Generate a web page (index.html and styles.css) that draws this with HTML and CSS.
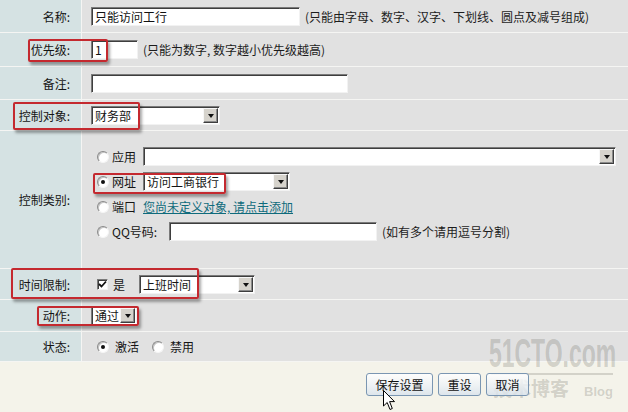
FILE: index.html
```html
<!DOCTYPE html>
<html lang="zh-CN">

<head>
    <meta charset="utf-8">
    <title>访问控制规则</title>
    <link rel="stylesheet" href="styles.css">
</head>

<body>
    <div class="page">
        <!-- 规则表单 -->
        <div class="form">
            <div class="row row-name">
                <div class="lab">名称:</div>
                <div class="val">
                    <input class="txt txt-name" type="text" value="只能访问工行">
                    <span class="hint hint-name">(只能由字母、数字、汉字、下划线、圆点及减号组成)</span>
                </div>
            </div>
            <div class="row row-prio">
                <div class="lab">优先级:</div>
                <div class="val">
                    <input class="txt txt-prio" type="text" value="1">
                    <span class="hint">(只能为数字, 数字越小优先级越高)</span>
                </div>
            </div>
            <div class="row row-note">
                <div class="lab">备注:</div>
                <div class="val">
                    <input class="txt txt-note" type="text" value="">
                </div>
            </div>
            <div class="row row-obj">
                <div class="lab">控制对象:</div>
                <div class="val">
                    <div class="sel sel-obj"><span class="sel-text">财务部</span><span class="sel-btn"></span></div>
                </div>
            </div>
            <div class="row row-type">
                <div class="lab">控制类别:</div>
                <div class="val val-opts">
                    <div class="opt">
                        <span class="radio"></span><span class="opt-name">应用</span>
                        <div class="sel sel-app"><span class="sel-text"></span><span class="sel-btn"></span></div>
                    </div>
                    <div class="opt">
                        <span class="radio on"></span><span class="opt-name">网址</span>
                        <div class="sel sel-url"><span class="sel-text">访问工商银行</span><span class="sel-btn"></span></div>
                    </div>
                    <div class="opt">
                        <span class="radio"></span><span class="opt-name">端口</span>
                        <a href="#" class="add">您尚未定义对象, 请点击添加</a>
                    </div>
                    <div class="opt">
                        <span class="radio"></span><span class="opt-name opt-qq">QQ号码:</span>
                        <input class="txt txt-qq" type="text" value="">
                        <span class="hint">(如有多个请用逗号分割)</span>
                    </div>
                </div>
            </div>
            <div class="row row-time">
                <div class="lab">时间限制:</div>
                <div class="val">
                    <span class="check">
                        <svg width="9" height="9" viewBox="0 0 9 9"><path d="M1 4 L3.5 6.5 L8 1.5" fill="none" stroke="#111" stroke-width="1.8"/></svg>
                    </span>
                    <span class="yes">是</span>
                    <div class="sel sel-time"><span class="sel-text">上班时间</span><span class="sel-btn"></span></div>
                </div>
            </div>
            <div class="row row-act">
                <div class="lab">动作:</div>
                <div class="val">
                    <div class="sel sel-act"><span class="sel-text">通过</span><span class="sel-btn"></span></div>
                </div>
            </div>
            <div class="row row-state">
                <div class="lab">状态:</div>
                <div class="val">
                    <span class="radio on"></span><span class="state">激活</span>
                    <span class="radio radio-off"></span><span class="state">禁用</span>
                </div>
            </div>
        </div>

        <!-- 水印放在按钮下层 -->
        <div class="watermark">
            <div class="wm-big">51CTO.com</div>
            <div class="wm-line"></div>
            <div class="wm-small"><span>技术博客</span><span class="wm-blog">Blog</span></div>
        </div>

        <div class="foot">
            <button class="xp xp-save">保存设置</button>
            <button class="xp">重设</button>
            <button class="xp">取消</button>
        </div>

        <!-- 红框标注 -->
        <div class="mark mark-prio"></div>
        <div class="mark mark-obj"></div>
        <div class="mark mark-url"></div>
        <div class="mark mark-time"></div>
        <div class="mark mark-act"></div>

        <svg class="pointer" width="13" height="21" viewBox="0 0 13 21">
            <path d="M0.5 0.5 L0.5 16 L4.2 12.5 L7 19.5 L9.3 18.5 L6.6 11.6 L11.5 11.6 Z" fill="#fff" stroke="#000" stroke-width="1"/>
        </svg>
    </div>
</body></html>
```

FILE: styles.css
```css
* {
    box-sizing: border-box;
}

body {
    margin: 0;
    font-family: "Noto Sans CJK SC", sans-serif;
    font-size: 12px;
    color: #151515;
    background: #f4f3ea;
}

.page {
    position: relative;
    width: 628px;
    height: 412px;
    overflow: hidden;
}

.row {
    display: grid;
    grid-template-columns: 82px 1fr;
    border-bottom: 1px solid #f5f5f3;
}

.row-name { height: 33px; }
.row-prio { height: 34px; }
.row-note { height: 33px; }
.row-obj { height: 31px; }
.row-type { height: 138px; }
.row-time { height: 31px; }
.row-act { height: 32px; }
.row-state { height: 30px; }

.lab {
    background: #d5e2e3;
    border-right: 1px solid #f5f5f3;
    display: flex;
    align-items: center;
    justify-content: flex-end;
    padding-right: 11px;
}

.val {
    background: #e1e1e1;
    display: flex;
    align-items: center;
    padding-left: 9px;
}

/* 输入框 */
.txt {
    height: 19px;
    margin: 0;
    padding: 0 3px;
    border: 1px solid;
    border-color: #7a7a7a #f2f2f2 #f2f2f2 #7a7a7a;
    box-shadow: inset 1px 1px 0 #3e3e3e;
    background: #fff;
    font-family: "Noto Sans CJK SC", sans-serif;
    font-size: 12px;
    color: #111;
    outline: none;
}

.txt-name { width: 209px; }
.txt-prio { width: 47px; }
.txt-note { width: 257px; }
.txt-qq { width: 208px; }

.hint {
    margin-left: 5px;
    color: #1c1c1c;
}

/* 下拉框 */
.sel {
    display: flex;
    align-items: stretch;
    height: 19px;
    padding: 1px 1px 1px 3px;
    border: 1px solid;
    border-color: #7a7a7a #f2f2f2 #f2f2f2 #7a7a7a;
    box-shadow: inset 1px 1px 0 #3e3e3e;
    background: #fff;
}

.sel-text {
    flex: 1;
    line-height: 15px;
    white-space: nowrap;
    overflow: hidden;
}

.sel-btn {
    width: 15px;
    background: #d6d3cc;
    border: 1px solid;
    border-color: #f7f7f7 #3e3e3e #3e3e3e #f7f7f7;
    box-shadow: inset -1px -1px 0 #8a8a8a;
    display: flex;
    align-items: center;
    justify-content: center;
}

.sel-btn::after {
    content: "";
    border-left: 3.5px solid transparent;
    border-right: 3.5px solid transparent;
    border-top: 4px solid #111;
    margin-top: 1px;
}

.sel-obj { width: 129px; }
.sel-app { width: 473px; }
.sel-url { width: 147px; }
.sel-time { width: 116px; }
.sel-act { width: 46px; }

/* 控制类别 */
.val-opts {
    flex-direction: column;
    align-items: flex-start;
    justify-content: flex-start;
    padding-top: 13px;
}

.opt {
    height: 25px;
    display: flex;
    align-items: center;
}

.radio {
    width: 12px;
    height: 12px;
    margin-left: 6px;
    border-radius: 50%;
    border: 1px solid;
    border-color: #8a8a8a #f5f5f5 #f5f5f5 #8a8a8a;
    background: #fff;
    box-shadow: inset 1px 1px 0 #c4c4c4;
    display: flex;
    align-items: center;
    justify-content: center;
}

.radio.on::after {
    content: "";
    width: 4px;
    height: 4px;
    border-radius: 50%;
    background: #111;
}

.radio-off {
    margin-left: 13px;
}

.opt-name {
    width: 31px;
    margin-left: 3px;
}

.opt-qq {
    width: 57px;
}

.add {
    color: #0f6b7c;
    text-decoration: underline;
}

.check {
    width: 11px;
    height: 11px;
    margin-left: 6px;
    border: 1px solid;
    border-color: #7a7a7a #f2f2f2 #f2f2f2 #7a7a7a;
    box-shadow: inset 1px 1px 0 #3e3e3e;
    background: #fff;
    display: flex;
    align-items: center;
    justify-content: center;
}

.yes {
    margin-left: 5px;
    width: 26px;
}

.state {
    margin-left: 6px;
}

/* 底部按钮 */
.foot {
    position: relative;
    height: 50px;
    display: flex;
    align-items: flex-start;
    gap: 5px;
    padding: 11px 0 0 366px;
}

.xp {
    height: 23px;
    width: 43px;
    padding: 0;
    border: 1px solid #7a96b2;
    border-radius: 3px;
    background: linear-gradient(rgba(255, 255, 255, 0.85), rgba(236, 241, 246, 0.8) 55%, rgba(216, 226, 236, 0.8));
    font-family: "Noto Sans CJK SC", sans-serif;
    font-size: 12px;
    color: #111;
}

.xp-save {
    width: 67px;
}

/* 红框 */
.mark {
    position: absolute;
    border: 2px solid #c4292f;
    border-radius: 2px;
    box-shadow: 2px 3px 3px rgba(0, 0, 0, 0.35);
}

.mark-prio { left: 28px; top: 39px; width: 80px; height: 23px; }
.mark-obj { left: 13px; top: 102px; width: 127px; height: 28px; }
.mark-url { left: 93px; top: 173px; width: 133px; height: 21px; }
.mark-time { left: 11px; top: 268px; width: 188px; height: 31px; }
.mark-act { left: 37px; top: 306px; width: 102px; height: 20px; }

/* 水印 */
.watermark {
    position: absolute;
    left: 489px;
    top: 333px;
    width: 126px;
    color: rgba(95, 95, 85, 0.24);
    pointer-events: none;
}

.wm-big {
    font-family: "Liberation Sans", sans-serif;
    font-weight: bold;
    font-size: 41px;
    line-height: 40px;
    transform: scaleX(0.56);
    transform-origin: left top;
    white-space: nowrap;
}

.wm-line {
    height: 2px;
    margin: 0 2px;
    background: rgba(95, 95, 85, 0.22);
}

.wm-small {
    display: flex;
    align-items: baseline;
    justify-content: space-between;
    padding: 0 2px 0 4px;
    font-size: 19px;
    font-weight: bold;
    line-height: 26px;
}

.wm-blog {
    font-family: "Liberation Sans", sans-serif;
    font-size: 13px;
}

.pointer {
    position: absolute;
    left: 383px;
    top: 390px;
}
```
